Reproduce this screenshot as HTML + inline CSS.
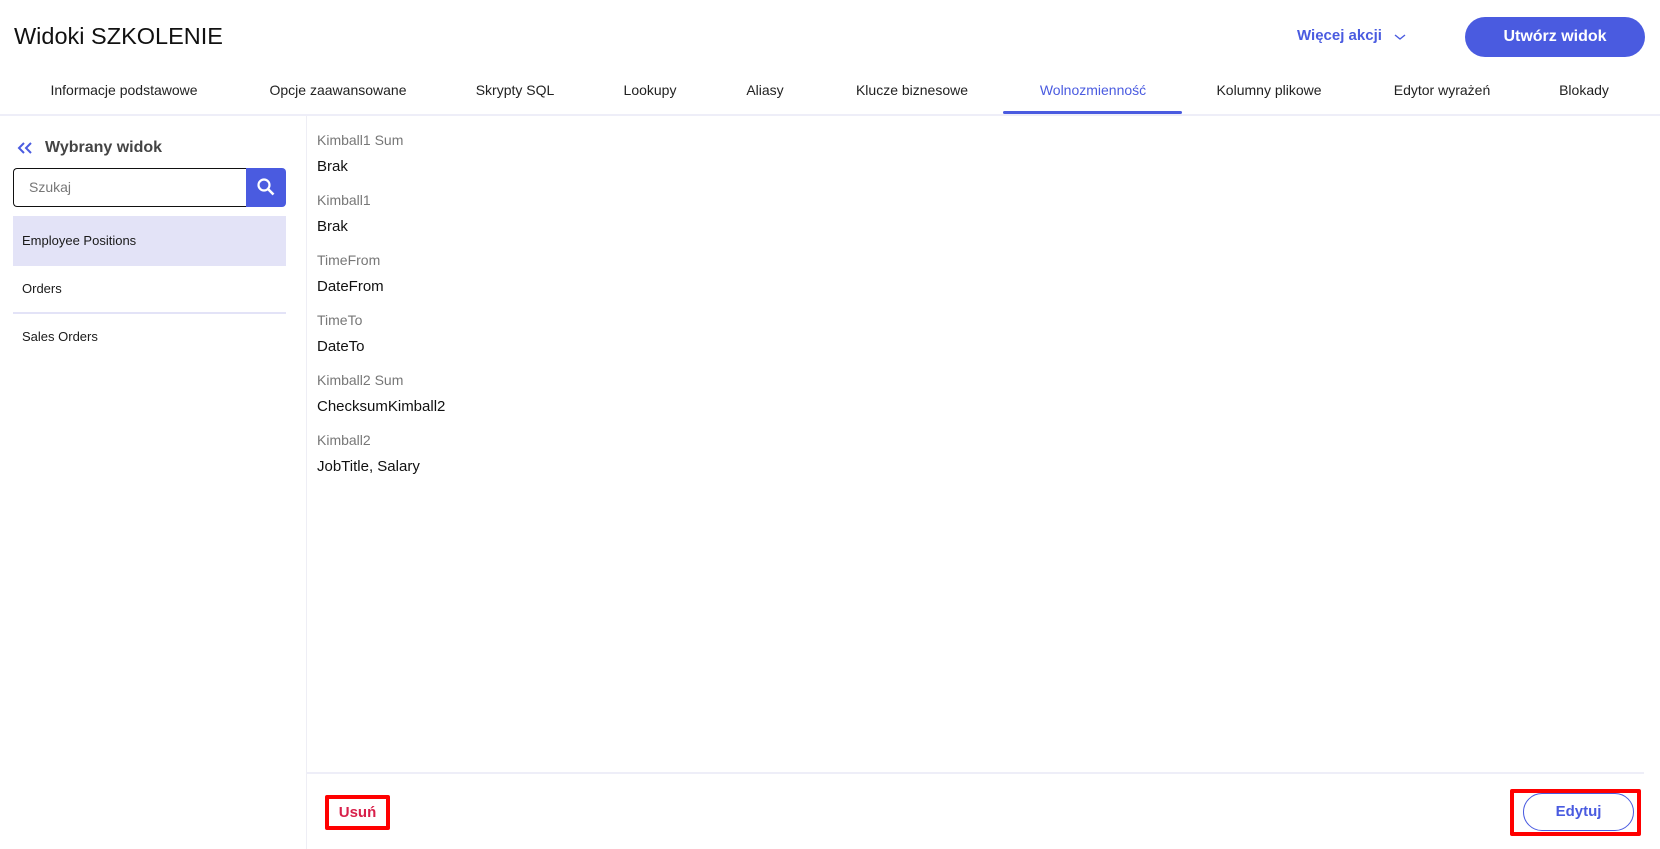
<!DOCTYPE html>
<html><head><meta charset="utf-8"><style>
*{box-sizing:border-box;margin:0;padding:0}
body{width:1660px;height:849px;background:#fff;font-family:"Liberation Sans",sans-serif;position:relative;overflow:hidden;color:#1a1a1a}
.a{position:absolute;white-space:nowrap}
.tab{position:absolute;top:82px;font-size:14px;color:#222;transform:translateX(-50%)}
.lbl{position:absolute;left:317px;font-size:14px;color:#777}
.val{position:absolute;left:317px;font-size:15px;color:#111}
</style></head><body>
<div class="a" style="left:14px;top:23px;font-size:23.5px;color:#111">Widoki SZKOLENIE</div>
<div class="a" style="left:1297px;top:27px;font-size:15px;color:#4a5be0;font-weight:bold">Więcej akcji</div>
<svg class="a" style="left:1393px;top:32px" width="14" height="10" viewBox="0 0 14 10"><path d="M2 3l5 4 5-4" stroke="#4a5be0" stroke-width="1.4" fill="none"/></svg>
<div class="a" style="left:1465px;top:17px;width:180px;height:40px;border-radius:20px;background:#4a5be0;color:#fff;font-weight:bold;font-size:16px;text-align:center;line-height:40px">Utwórz widok</div>

<div class="tab" style="left:124px">Informacje podstawowe</div>
<div class="tab" style="left:338px">Opcje zaawansowane</div>
<div class="tab" style="left:515px">Skrypty SQL</div>
<div class="tab" style="left:650px">Lookupy</div>
<div class="tab" style="left:765px">Aliasy</div>
<div class="tab" style="left:912px">Klucze biznesowe</div>
<div class="tab" style="left:1093px;color:#4a5be0">Wolnozmienność</div>
<div class="tab" style="left:1269px">Kolumny plikowe</div>
<div class="tab" style="left:1442px">Edytor wyrażeń</div>
<div class="tab" style="left:1584px">Blokady</div>
<div class="a" style="left:0;top:114px;width:1660px;height:2px;background:#eeeef8"></div>
<div class="a" style="left:1003px;top:111px;width:179px;height:3px;background:#4a5be0;border-radius:2px"></div>

<div class="a" style="left:306px;top:116px;width:1px;height:733px;background:#eeeef5"></div>
<svg class="a" style="left:16px;top:140px" width="18" height="16" viewBox="0 0 18 16"><path d="M8 3l-5 5 5 5M15 3l-5 5 5 5" stroke="#4a5be0" stroke-width="2" fill="none"/></svg>
<div class="a" style="left:45px;top:139px;font-size:16px;font-weight:bold;color:#444">Wybrany widok</div>
<div class="a" style="left:13px;top:168px;width:235px;height:39px;border:1.5px solid #111;border-right:none;border-radius:4px 0 0 4px"></div>
<div class="a" style="left:29px;top:179px;font-size:14px;color:#777">Szukaj</div>
<div class="a" style="left:246px;top:168px;width:40px;height:39px;background:#4a5be0;border-radius:0 4px 4px 0"></div>
<svg class="a" style="left:256px;top:177px" width="20" height="20" viewBox="0 0 20 20"><circle cx="8" cy="8" r="5.5" stroke="#fff" stroke-width="2.2" fill="none"/><path d="M12 12l5.5 5.5" stroke="#fff" stroke-width="2.6"/></svg>
<div class="a" style="left:13px;top:216px;width:273px;height:50px;background:#e3e3f7"></div>
<div class="a" style="left:22px;top:233px;font-size:13px">Employee Positions</div>
<div class="a" style="left:22px;top:281px;font-size:13px">Orders</div>
<div class="a" style="left:13px;top:312px;width:273px;height:2px;background:#e3e3f7"></div>
<div class="a" style="left:22px;top:329px;font-size:13px">Sales Orders</div>

<div class="lbl" style="top:132px">Kimball1 Sum</div><div class="val" style="top:158px">Brak</div>
<div class="lbl" style="top:192px">Kimball1</div><div class="val" style="top:218px">Brak</div>
<div class="lbl" style="top:252px">TimeFrom</div><div class="val" style="top:278px">DateFrom</div>
<div class="lbl" style="top:312px">TimeTo</div><div class="val" style="top:338px">DateTo</div>
<div class="lbl" style="top:372px">Kimball2 Sum</div><div class="val" style="top:398px">ChecksumKimball2</div>
<div class="lbl" style="top:432px">Kimball2</div><div class="val" style="top:458px">JobTitle, Salary</div>

<div class="a" style="left:307px;top:772px;width:1337px;height:2px;background:#eeeef8"></div>
<div class="a" style="left:325px;top:795px;width:65px;height:35px;border:4px solid #f00;border-radius:2px;color:#d8204a;font-weight:bold;font-size:15px;text-align:center;line-height:28px">Usuń</div>
<div class="a" style="left:1510px;top:789px;width:131px;height:47px;border:4px solid #f00;border-radius:2px"></div>
<div class="a" style="left:1523px;top:793px;width:111px;height:38px;border:1.5px solid #4a5be0;border-radius:19px;color:#4a5be0;font-weight:bold;font-size:15px;text-align:center;line-height:36px">Edytuj</div>
</body></html>
